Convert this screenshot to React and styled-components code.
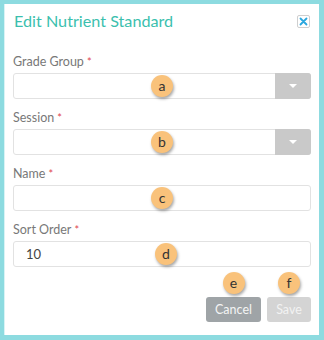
import React from "react";
import styled, { createGlobalStyle } from "styled-components";

const Global = createGlobalStyle`
    * { box-sizing: border-box; }
    html, body {
        margin: 0;
        padding: 0;
        background: #8ddbe0;
        font-family: Lato, "Liberation Sans", sans-serif;
    }
`;

function Field({ label, badge, badgeShift, select, value }) {
    return (
        <FieldWrap>
            <Label>{label}<Req>*</Req></Label>
            <InputRow>
                <Input>{value}</Input>
                {select && <Drop><Caret /></Drop>}
                <Badge style={{ left: `calc(50% + ${badgeShift || 0}px)` }}>{badge}</Badge>
            </InputRow>
        </FieldWrap>
    );
}

export default function App() {
    return (
        <>
            <Global />
            <Frame>
                <Dialog>
                    <Header>
                        <Title>Edit Nutrient Standard</Title>
                        <Close>
                            <svg width="9" height="9" viewBox="0 0 9 9">
                                <path d="M1.5 1.5 L7.5 7.5 M7.5 1.5 L1.5 7.5" stroke="#2aa7df" strokeWidth="1.8" strokeLinecap="round" />
                            </svg>
                        </Close>
                    </Header>

                    <Form>
                        <Field label="Grade Group" badge="a" select />
                        <Field label="Session" badge="b" select />
                        <Field label="Name" badge="c" />
                        <Field label="Sort Order" badge="d" badgeShift={4} value="10" />
                    </Form>

                    <Footer>
                        <Button kind="cancel">Cancel<Badge top>e</Badge></Button>
                        <Button kind="save">Save<Badge top>f</Badge></Button>
                    </Footer>
                </Dialog>
            </Frame>
        </>
    );
}

const Frame = styled.div`
    width: 324px;
    height: 340px;
    padding: 4px 5px 5px 4px;
    background: #8ddbe0;
`;

const Dialog = styled.div`
    height: 100%;
    background: #ffffff;
    border-left: 1px solid #d9f3f5;
    padding: 0 8px 0 8px;
    display: flex;
    flex-direction: column;
`;

const Header = styled.div`
    display: flex;
    justify-content: space-between;
    align-items: flex-start;
    height: 50px;
    padding: 7px 1px 0 1px;
`;

const Title = styled.div`
    font-size: 16.2px;
    line-height: 20px;
    color: #3bbfae;
`;

const Close = styled.div`
    margin-top: 4px;
    width: 13px;
    height: 13px;
    border: 1px solid #cfcfcf;
    border-radius: 2px;
    display: flex;
    align-items: center;
    justify-content: center;
`;

const Form = styled.div`
    display: flex;
    flex-direction: column;
    gap: 11px;
`;

const FieldWrap = styled.div`
    display: flex;
    flex-direction: column;
`;

const Label = styled.div`
    font-size: 12.5px;
    line-height: 16px;
    color: #787878;
    margin-bottom: 3px;
`;

const Req = styled.span`
    color: #e0454f;
    font-size: 11px;
    margin-left: 3px;
    vertical-align: top;
`;

const InputRow = styled.div`
    position: relative;
    display: flex;
    height: 26px;
    border: 1px solid #e2e2e2;
    border-radius: 3px;
`;

const Input = styled.div`
    flex: 1;
    padding: 0 12px;
    font-size: 13px;
    line-height: 24px;
    color: #444;
`;

const Drop = styled.div`
    width: 36px;
    margin: -1px -1px -1px 0;
    background: #c9c9c9;
    border-radius: 0 3px 3px 0;
    display: flex;
    align-items: center;
    justify-content: center;
`;

const Caret = styled.div`
    width: 0;
    height: 0;
    border-left: 4px solid transparent;
    border-right: 4px solid transparent;
    border-top: 4px solid #ffffff;
`;

const Badge = styled.div`
    position: absolute;
    left: 50%;
    top: ${p => (p.top ? "-14px" : "50%")};
    transform: translate(-50%, -50%);
    width: 22px;
    height: 22px;
    border-radius: 50%;
    background: #f9c27b;
    box-shadow: 1px 2px 3px rgba(0, 0, 0, 0.35);
    color: #333;
    font-family: Lato, "Liberation Sans", sans-serif;
    font-size: 14px;
    line-height: 22px;
    text-align: center;
`;

const Footer = styled.div`
    display: flex;
    justify-content: flex-end;
    gap: 6px;
    margin-top: 30px;
`;

const Button = styled.div`
    position: relative;
    width: ${p => (p.kind === "cancel" ? "55px" : "44px")};
    height: 25px;
    border-radius: 3px;
    background: ${p => (p.kind === "cancel" ? "#9fa4a7" : "#d4d4d4")};
    color: ${p => (p.kind === "cancel" ? "#f4f4f4" : "#f2f2f2")};
    font-size: 12.5px;
    line-height: 25px;
    text-align: center;
`;
